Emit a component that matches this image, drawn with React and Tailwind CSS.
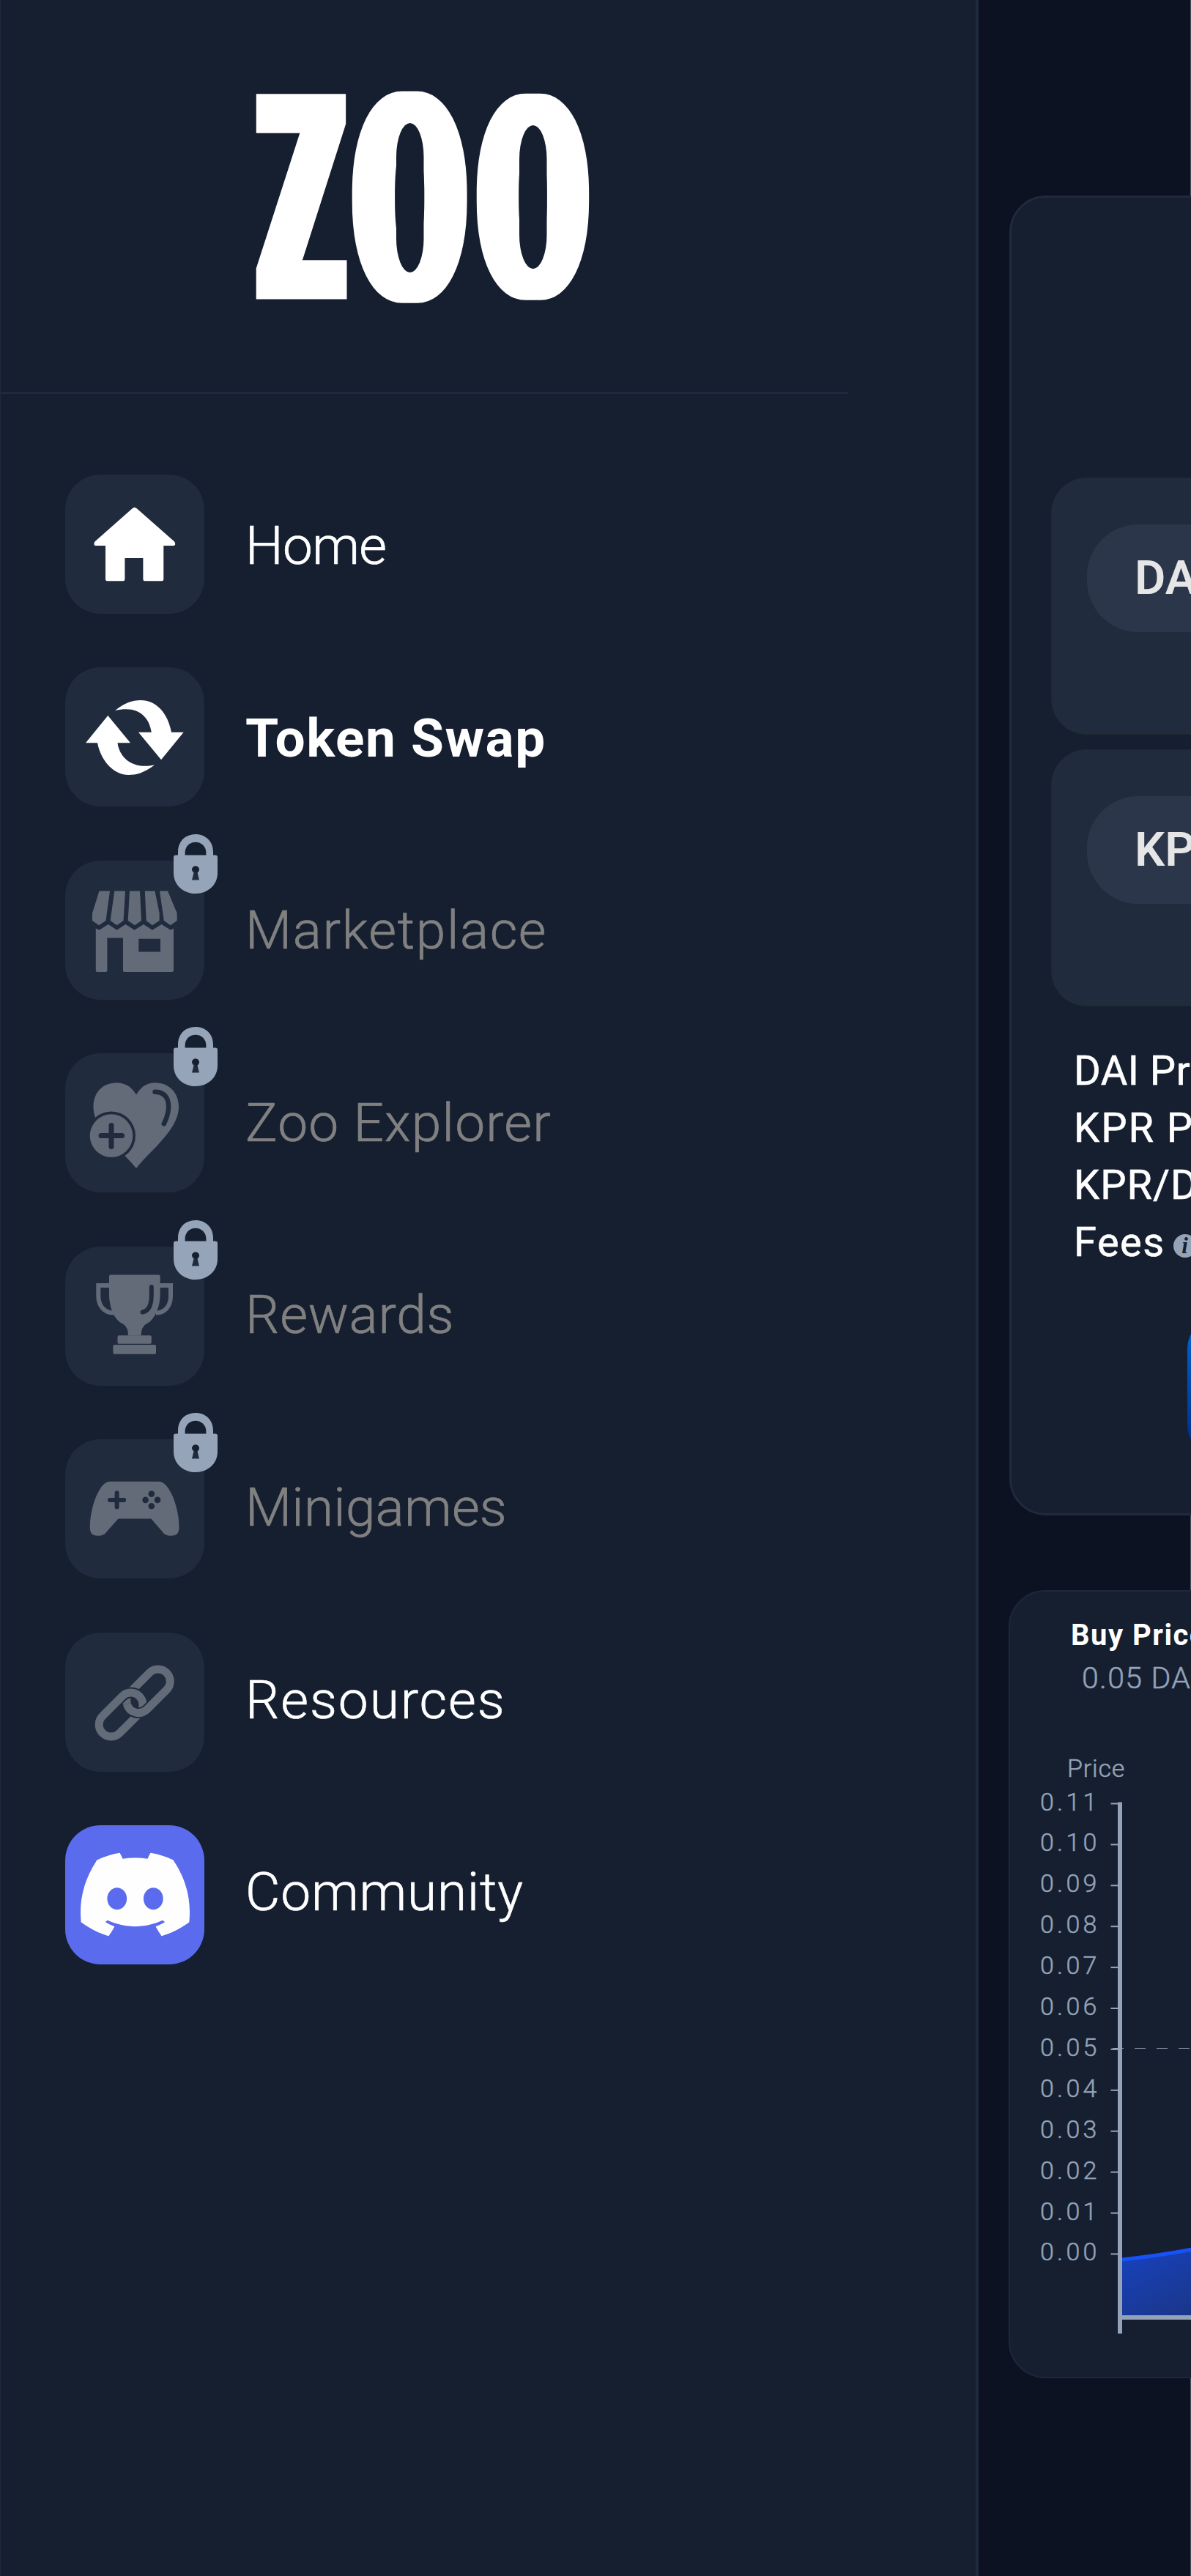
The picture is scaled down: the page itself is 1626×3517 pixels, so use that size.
import React from "react";
import { SiDiscord } from "react-icons/si";

function Glyph({ children, className = "text-[#636b79]" }) {
  return (
    <svg viewBox="0 0 190 190" className={`h-[190px] w-[190px] ${className}`} fill="currentColor">
      {children}
    </svg>
  );
}

const HomeIcon = () => (
  <Glyph className="text-white">
    <path d="M91.6 46.2Q94.6 43.2 97.8 46.2L149.2 91.4Q152 97 147 97H134.3V143q0 2.3-2.3 2.3H108.7q-2.3 0-2.3-2.3V114H81.4V143q0 2.3-2.3 2.3H57.3q-2.3 0-2.3-2.3V97H42.6Q37.6 97 40.4 91.4Z" />
  </Glyph>
);

const SwapIcon = () => (
  <Glyph className="text-white">
    <path d="M58.3 66L89 103.3H71.5C74 122 90 140 122 133.5C107 144.500 97 147 86.600 147C66 147 49 128 44 103.300H28Z" />
    <path d="M131 126.300L100 88.700H117.800C114 66 98 52 68 59.300C80 49 92 45 103 45C124 45 140 62 145 88.700H161.700Z" />
  </Glyph>
);

const MarketIcon = () => (
  <Glyph>
    <path d="M46.500 41.600H61L55.500 82L46 88.200L37 82V71.700Z" />
    <path d="M67.300 41.600H82L79.500 82L70.600 88.200L61.600 82Z" />
    <path d="M88 41.600H102L104 82L95 88.200L85.700 82Z" />
    <path d="M108.800 41.600H122.500L128.600 71.700V82L119 88.200L110.700 82Z" />
    <path d="M129 41.600H140L152.700 71.700V82L143.700 88.200L134.800 82Z" />
    <path
      fillRule="evenodd"
      d="M41.800 92.600L46.500 94.800L58.800 87L70.600 94.800L82.400 87L94.600 94.800L107 87L119 94.800L131.500 87L144 94.800L148 92.600V150q0 2-2 2H81q-2 0-2-2V105.500H57.400V150q0 2-2 2H43.800q-2 0-2-2ZM100.300 106.800V124.400H130V106.800Z"
    />
  </Glyph>
);

const HeartIcon = () => (
  <Glyph>
    <path d="M97 56.500C104 45 112 40.200 123 40.200C143 40.200 155 55 155 73C155 104 118 131 97 157C75 130 38.500 106 38.500 73C38.500 54 51 40.200 70 40.200C81 40.200 90 45 97 56.500Z" />
    <path d="M122.500 52.800C144 53 145 76 134.800 96.300" fill="none" stroke="#202b3e" strokeWidth="6.500" strokeLinecap="round" />
    <circle cx="63" cy="112.600" r="33" fill="#202b3e" />
    <circle cx="63" cy="112.600" r="29.300" />
    <path d="M49 112.600H77.500M63 98.500V127.500" stroke="#202b3e" strokeWidth="7" strokeLinecap="round" />
  </Glyph>
);

const TrophyIcon = () => (
  <Glyph>
    <path d="M62 38.500H127.600q2 0 2 2V66C129.600 82 122 101 110 106Q103.600 110 103.600 121.400H86Q86 110 79.500 106C67 101 60 82 60 66V40.500q0-2 2-2Z" />
    <path d="M62 53H45.300V68C45.300 80 53 90.500 66 90.500M127.500 53H144V68C144 80 137 90.500 124 90.500" fill="none" stroke="currentColor" strokeWidth="6" />
    <rect x="71.500" y="121.200" width="46.300" height="11.600" rx="2" />
    <rect x="65.400" y="133.900" width="58.600" height="12.900" rx="2" />
    <path d="M117.800 55V66C117.800 79 115 88 105.500 89.500" fill="none" stroke="#202b3e" strokeWidth="6" strokeLinecap="round" />
  </Glyph>
);

const GamepadIcon = () => (
  <Glyph>
    <path d="M61 57.800H127.700C143 57.800 155.500 95 155.500 119C155.500 128 153 131.800 144 131.800Q136 131.800 132.500 126L117.300 108.500H72.500L56.800 126Q53.500 131.800 45 131.800C36 131.800 33.800 128 33.800 119C33.800 95 46 57.800 61 57.800Z" />
    <g fill="#202b3e" stroke="none">
      <rect x="58" y="79.900" width="25.200" height="6" rx="3" />
      <rect x="67.600" y="70.200" width="6" height="25.200" rx="3" />
      <circle cx="117.800" cy="74.600" r="4.300" />
      <circle cx="117.800" cy="91.200" r="4.300" />
      <circle cx="109.600" cy="82.900" r="4.300" />
      <circle cx="126" cy="82.900" r="4.300" />
    </g>
  </Glyph>
);

const LinkIcon = () => (
  <Glyph>
    <g transform="translate(95 96) rotate(-45)" fill="none">
      <rect x="-10.700" y="-14.900" width="70.500" height="33" rx="16.500" stroke="currentColor" strokeWidth="11" />
      <path d="M-30 -18.500H-5.700A16.500 16.500 0 0 1 -5.700 14.500H-30" stroke="#202b3e" strokeWidth="15" />
      <rect x="-60.200" y="-18.500" width="71" height="33" rx="16.500" stroke="currentColor" strokeWidth="11" />
      <path d="M-8.500 -6.700A16.500 16.500 0 0 0 5.800 18.100H13" stroke="#202b3e" strokeWidth="15" />
      <path d="M-8.500 -6.700A16.500 16.500 0 0 0 5.800 18.100H14" stroke="currentColor" strokeWidth="11" />
    </g>
  </Glyph>
);

const DiscordIcon = () => <SiDiscord className="h-[149px] w-[149px] text-[#fefefe]" />;

function LockIcon() {
  return (
    <svg viewBox="0 0 60 81" className="absolute -top-[36px] left-[148px] h-[81px] w-[60px] text-[#96a4ba]" fill="currentColor">
      <path
        fillRule="evenodd"
        d="M6 28.400V24C6 10 16 0 30 0S54 10 54 24V28.400H57q3 0 3 3V53C60 69 47 81 30 81S0 69 0 53V31.400q0-3 3-3ZM15.600 28.400H44.400V25C44.400 17 38 10.800 30 10.800S15.600 17 15.600 25ZM27.500 52.500L25 62.500H35L32.500 52.500A5 5 0 1 0 27.500 52.500Z"
      />
    </svg>
  );
}

const LIGHT = "font-light [-webkit-text-stroke:0.7px_currentColor]";

const ITEMS = [
  { label: "Home", Icon: HomeIcon, tone: `${LIGHT} text-white tracking-[-0.7px]` },
  { label: "Token Swap", Icon: SwapIcon, tone: "font-bold text-white tracking-[1.5px]" },
  { label: "Marketplace", Icon: MarketIcon, locked: true, tone: `${LIGHT} text-[#808080] tracking-[1.6px]` },
  { label: "Zoo Explorer", Icon: HeartIcon, locked: true, tone: `${LIGHT} text-[#808080] tracking-[1.2px]` },
  { label: "Rewards", Icon: TrophyIcon, locked: true, tone: `${LIGHT} text-[#808080] tracking-[0.8px]` },
  { label: "Minigames", Icon: GamepadIcon, locked: true, tone: `${LIGHT} text-[#808080] tracking-[0.2px]` },
  { label: "Resources", Icon: LinkIcon, tone: `${LIGHT} text-white tracking-[1.9px]` },
  { label: "Community", Icon: DiscordIcon, tile: "bg-[#5a6bee]", tone: `${LIGHT} text-white tracking-[0.8px]` },
];

function Logo() {
  return (
    <svg viewBox="0 0 1156 535" className="h-[535px] w-[1156px]" fill="#ffffff" fontFamily="Roboto, sans-serif" textAnchor="middle">
      <defs>
        <filter id="heavyZ" filterUnits="userSpaceOnUse" x="300" y="80" width="560" height="380">
          <feMorphology operator="dilate" radius="14 5" />
        </filter>
        <filter id="heavyO" filterUnits="userSpaceOnUse" x="300" y="80" width="560" height="380">
          <feMorphology operator="dilate" radius="10 0.001" />
        </filter>
      </defs>
      <g filter="url(#heavyZ)" fontWeight="700">
        <text transform="translate(410 403.500) scale(0.465 1)" fontSize="380">Z</text>
      </g>
      <g filter="url(#heavyO)" fontWeight="900">
        <text transform="translate(558.200 410) scale(0.556 1)" fontSize="396">O</text>
        <text transform="translate(726.500 406) scale(0.556 1)" fontSize="386">O</text>
      </g>
      <g fill="#161f30">
        <rect x="540" y="168" width="37.500" height="204" rx="18.700" ry="46" />
        <rect x="708" y="171" width="37.500" height="196" rx="18.700" ry="46" />
      </g>
    </svg>
  );
}

function Sidebar() {
  return (
    <aside className="w-[1336px] shrink-0 border-l border-r-4 border-l-[#1f2a3c] border-r-[#1f2a3c] bg-[#161f30]">
      <div className="h-[538px] w-[1157px] border-b-[3px] border-[#1f293b]">
        <Logo />
      </div>
      <nav className="flex pl-[88px]">
        <div className="flex flex-col gap-[73.430px] pt-[110px]">
          {ITEMS.map(({ label, Icon, locked, tile = "bg-[#202b3e]" }) => (
            <div key={label} className={`relative flex h-[190px] w-[190px] items-center justify-center rounded-[48px] ${tile}`}>
              <Icon />
              {locked && <LockIcon />}
            </div>
          ))}
        </div>
        <div className="flex flex-col gap-[162.600px] pl-[56px] pt-[157px]">
          {ITEMS.map(({ label, tone }) => (
            <div key={label} className={`whitespace-nowrap text-[73px] leading-[100px] ${tone}`}>
              {label}
            </div>
          ))}
        </div>
      </nav>
    </aside>
  );
}

function TokenPanel({ token }) {
  return (
    <div className="h-[351px] w-[1100px] rounded-[48px] border border-[#23282f] bg-[#202b3e] pl-[48px] pt-[63px]">
      <div className="flex h-[147px] w-[420px] items-center rounded-[70px] bg-[#2b364a] pl-[65px] text-[65px] font-semibold text-[#e6e6e6]">
        {token}
      </div>
    </div>
  );
}

function SwapCard() {
  return (
    <section className="ml-[42px] h-[1802px] w-[1240px] rounded-[50px] border-[3px] border-[#1f2a3d] bg-[#161f30] pl-[54px] pt-[382px]">
      <div className="flex flex-col gap-[20px]">
        <TokenPanel token="DAI" />
        <TokenPanel token="KPR" />
      </div>
      <div className="whitespace-nowrap pl-[31px] pt-[49px] text-[56px] leading-[78px] text-white [-webkit-text-stroke:0.6px_currentColor]">
        <p className="tracking-[0.500px]">DAI Price</p>
        <p className="tracking-[2px]">KPR Price</p>
        <p className="tracking-[1px]">KPR/DAI</p>
        <div className="flex items-center">
          <span className="w-[136px] tracking-[1.500px]">Fees</span>
          <svg viewBox="0 0 32 32" className="mt-[10px] h-[32px] w-[32px]">
            <circle cx="16" cy="16" r="16" fill="#94a3b8" />
            <text x="15.500" y="26" fontSize="31" fontWeight="700" fontStyle="italic" fontFamily="Liberation Serif, serif" textAnchor="middle" fill="#161f30">i</text>
          </svg>
        </div>
      </div>
      <div className="ml-[186px] mt-[66px] h-[185px] w-[600px] rounded-[40px] bg-linear-to-b from-[#0068da] to-[#002a84]" />
    </section>
  );
}

const PRICES = ["0.11", "0.10", "0.09", "0.08", "0.07", "0.06", "0.05", "0.04", "0.03", "0.02", "0.01", "0.00"];

function PriceChart() {
  return (
    <svg viewBox="1510 2432 116 768" className="h-[768px] w-[116px]">
      <defs>
        <linearGradient id="area" gradientUnits="userSpaceOnUse" x1="1540" y1="3080" x2="1590" y2="3180">
          <stop offset="0" stopColor="#1741b9" />
          <stop offset="1" stopColor="#1b3688" />
        </linearGradient>
      </defs>
      <path d="M1532 3084Q1580 3079 1626 3070.500V3161H1532Z" fill="url(#area)" />
      <path d="M1530 3084.200Q1580 3079 1628 3070" fill="none" stroke="#1652f8" strokeWidth="5" />
      <path d="M1519 2795.500H1626" stroke="#94a3b8" strokeWidth="1" strokeDasharray="15 15" />
      <rect x="1531" y="3160" width="95" height="6" fill="#94a3b8" />
      <rect x="1526" y="2459.500" width="6" height="725.500" fill="#94a3b8" />
      {PRICES.map((p, i) => (
        <rect key={p} x="1516.500" y={2460.500 + i * 55.900} width="10" height="2" fill="#94a3b8" />
      ))}
    </svg>
  );
}

function ChartCard() {
  return (
    <section className="ml-[41px] mt-[101.500px] h-[1076px] w-[1240px] whitespace-nowrap rounded-[50px] border-2 border-[#1d283a] bg-[#161f30] pt-[36px] text-[#94a3b8]">
      <p className="pl-[83px] text-[40px] font-bold leading-[48px] tracking-[1.500px] text-white">Buy Price</p>
      <div className="font-light [-webkit-text-stroke:0.5px_currentColor]">
        <p className="mt-[5px] pl-[98px] text-[41px] leading-[59px] tracking-[1.300px]">0.05 DAI</p>
        <p className="mt-[73px] pl-[78px] text-[34px] leading-[40px] tracking-[0.800px]">Price</p>
      </div>
      <div className="-mt-px flex pl-[41px]">
        <div className="w-[90px] text-[34px] font-light leading-[55.900px] tracking-[4.200px] [-webkit-text-stroke:0.5px_currentColor]">
          {PRICES.map((p) => (
            <p key={p}>{p}</p>
          ))}
        </div>
        <PriceChart />
      </div>
    </section>
  );
}

export default function App() {
  return (
    <div className="flex h-[3517px] w-[1626px] overflow-hidden bg-[#0c1221] font-[Roboto,sans-serif]">
      <Sidebar />
      <main className="relative w-[290px] overflow-hidden pt-[267px]">
        <div className="absolute inset-y-0 right-0 w-px bg-[#4a505c]" />
        <div className="relative">
          <SwapCard />
          <ChartCard />
        </div>
      </main>
    </div>
  );
}
